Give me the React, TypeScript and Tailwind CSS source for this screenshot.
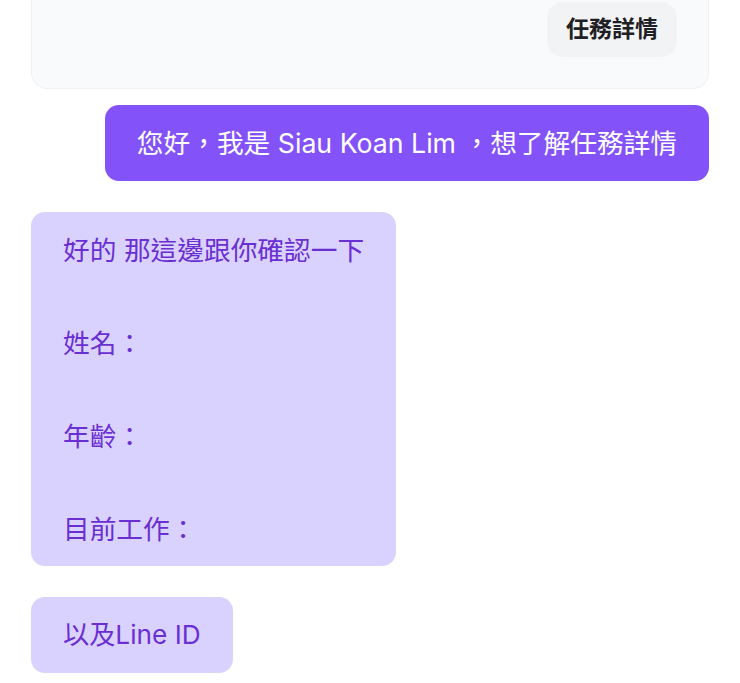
const font = { fontFamily: 'Inter, "Noto Sans CJK TC", sans-serif' };

export default function App() {
  return (
    <div className="min-h-screen bg-white px-[31px]" style={font}>
      <div className="flex justify-end rounded-b-2xl border-x border-b border-[#f0f1f3] bg-[#f9fafb] pr-[31px] pt-[2px] pb-[31px]">
        <button className="h-[55px] rounded-2xl bg-[#f2f3f5] px-[19px] text-[23px] font-bold text-[#1f2024]">
          任務詳情
        </button>
      </div>

      <div className="mt-[16px] flex justify-end">
        <div className="rounded-[14px] bg-[#8452f9] px-[32px] py-[15px] text-[26.7px] leading-[46px] text-white">
          您好，我是 Siau Koan Lim ，想了解任務詳情
        </div>
      </div>

      <div className="mt-[31px] flex justify-start">
        <div className="whitespace-pre-line rounded-[14px] bg-[#dad2fe] px-[32px] pt-[15px] pb-[13px] text-[26.7px] leading-[46.5px] text-[#6a2fd2]">
          {"好的 那這邊跟你確認一下\n\n姓名：\n\n年齡：\n\n目前工作："}
        </div>
      </div>

      <div className="mt-[31px] flex justify-start">
        <div className="rounded-[14px] bg-[#dad2fe] px-[32px] py-[15px] text-[26.2px] leading-[46px] text-[#6a2fd2]">
          以及Line ID
        </div>
      </div>
    </div>
  );
}
